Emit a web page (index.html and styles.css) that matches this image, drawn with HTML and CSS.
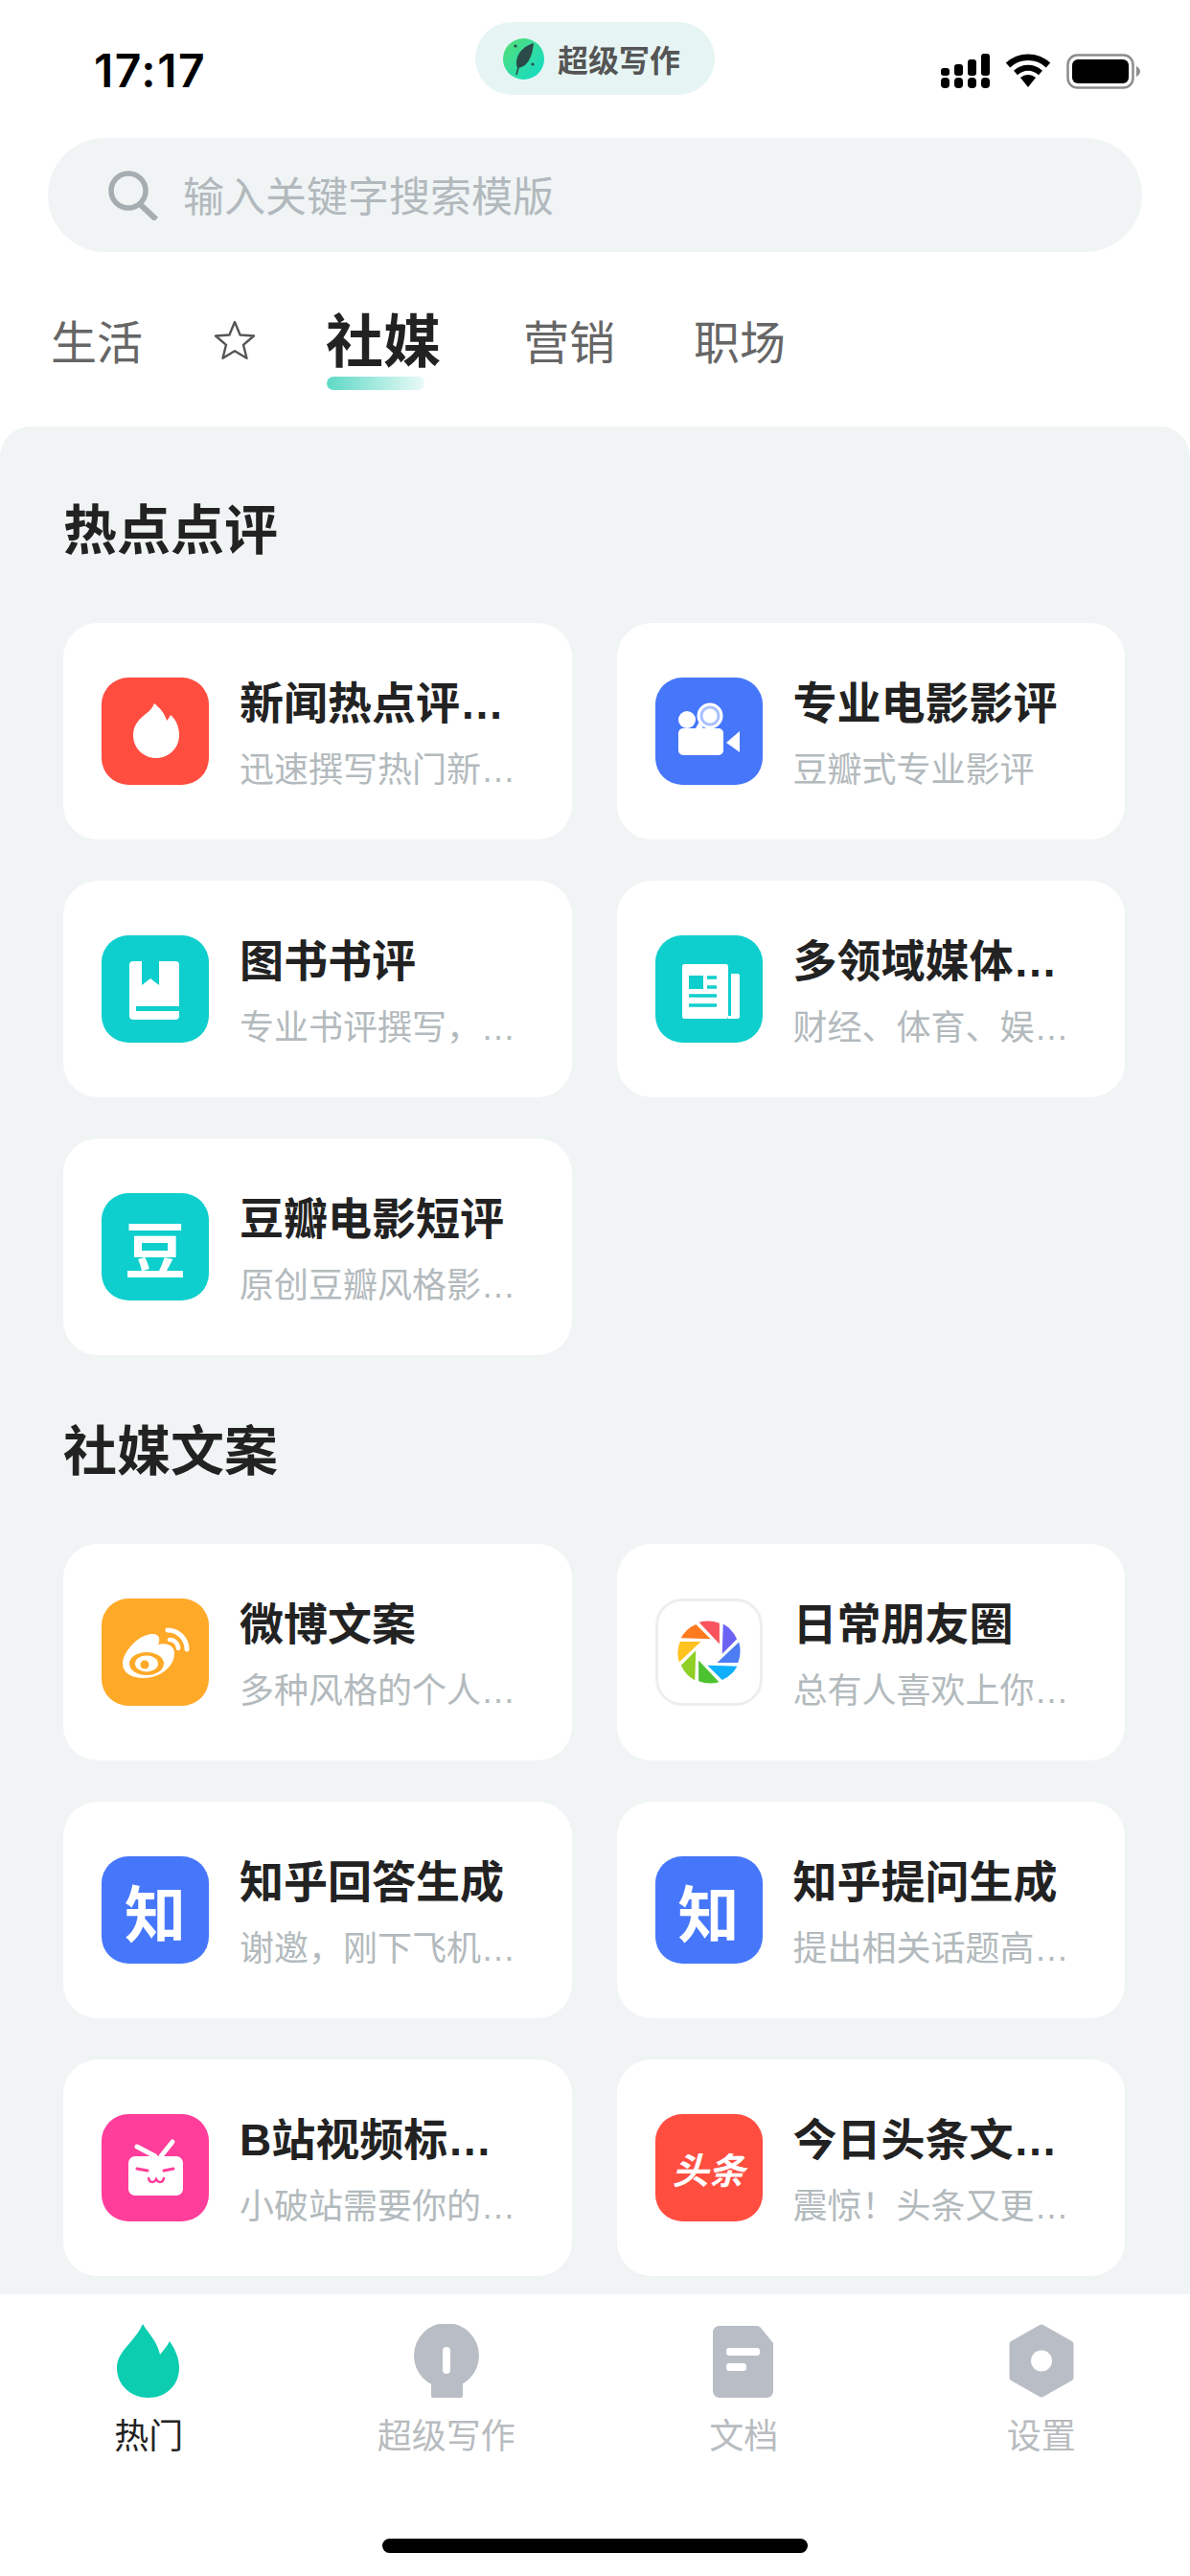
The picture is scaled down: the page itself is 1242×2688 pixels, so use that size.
FILE: index.html
```html
<!DOCTYPE html>
<html lang="zh-CN">
<head>
    <meta charset="UTF-8">
    <meta name="viewport" content="width=device-width, initial-scale=1.0">
    <title>超级写作</title>
    <link rel="stylesheet" href="styles.css">
</head>
<body>
    <!-- 状态栏 -->
    <header class="status-bar">
        <div class="time">17:17</div>
        <div class="app-pill">
            <svg class="app-logo" viewBox="0 0 43 43">
                <defs>
                    <linearGradient id="logoGrad" x1="0" y1="0" x2="1" y2="1">
                        <stop offset="0" stop-color="#57de74"/>
                        <stop offset="1" stop-color="#0edccb"/>
                    </linearGradient>
                </defs>
                <circle cx="21.5" cy="21.5" r="21.5" fill="url(#logoGrad)"/>
                <path d="M32 5C24 7 15 14 14 24c0 3 0 5 1 7 9-1 15-8 17-26z" fill="#2b4a4a"/>
                <path d="M17 27l-3 11" stroke="#2b4a4a" stroke-width="1.6" fill="none"/>
                <circle cx="13" cy="8" r="1.6" fill="#2b4a4a"/>
                <circle cx="31" cy="27" r="1.6" fill="#2b4a4a"/>
            </svg>
            <span>超级写作</span>
        </div>
        <div class="status-icons">
            <svg class="signal" viewBox="0 0 51 36">
                <rect x="0" y="25" width="9" height="11" rx="4"/><rect x="0" y="15" width="9" height="8" rx="3"/>
                <rect x="14" y="25" width="9" height="11" rx="4"/><rect x="14" y="11" width="9" height="12" rx="3"/>
                <rect x="28" y="25" width="9" height="11" rx="4"/><rect x="28" y="6" width="9" height="17" rx="3"/>
                <rect x="42" y="25" width="9" height="11" rx="4"/><rect x="42" y="0" width="9" height="23" rx="3"/>
            </svg>
            <svg class="wifi" viewBox="0 0 48 36">
                <path d="M3 12C15 1 33 1 45 12" fill="none" stroke="#000" stroke-width="6.5"/>
                <path d="M11 20c8-7 18-7 26 0" fill="none" stroke="#000" stroke-width="6"/>
                <path d="M16 25c5-4 11-4 16 0l-8 10z"/>
            </svg>
            <svg class="battery" viewBox="0 0 77 37">
                <rect x="1.5" y="1.5" width="68" height="34" rx="10" fill="none" stroke="#8c8c8c" stroke-width="2.5"/>
                <rect x="6" y="6" width="59" height="25" rx="6"/>
                <path d="M73 13c2 1 4 3 4 5.500s-2 4.500-4 5.500z" fill="#8c8c8c"/>
            </svg>
        </div>
    </header>

    <!-- 搜索 -->
    <div class="search">
        <svg class="search-icon" viewBox="0 0 54 52">
            <circle cx="22" cy="21" r="18" fill="none" stroke="#a5adb1" stroke-width="5.500"/>
            <path d="M34 35l17 16" stroke="#a5adb1" stroke-width="6" fill="none"/>
        </svg>
        <span class="search-text">输入关键字搜索模版</span>
    </div>

    <!-- 分类 -->
    <nav class="tabs">
        <span class="tab">生活</span>
        <svg class="tab-star" viewBox="0 0 44 42">
            <path d="M22 3l5.600 13.500 14.400 1-11 9.300 3.500 14-12.500-7.600-12.500 7.600 3.500-14-11-9.300 14.400-1z" fill="none" stroke="#555" stroke-width="2.400" stroke-linejoin="round"/>
        </svg>
        <span class="tab tab-active">社媒</span>
        <span class="tab tab-mid">营销</span>
        <span class="tab">职场</span>
    </nav>

    <main class="panel">
        <section class="group">
            <h2>热点点评</h2>
            <div class="cards">
                <div class="card">
                    <svg class="icon red" viewBox="0 0 112 112">
                        <path d="M55 27C60 31 66 37 68 45 70 43 71 41 72 39 78 44 81 52 81 60 81 74 70 84 57 84 44 84 33 74 33 60 33 49 40 43 46 38 50 35 53 32 55 27z" fill="#fff"/>
                    </svg>
                    <div class="card-text">
                        <div class="card-title">新闻热点评…</div>
                        <div class="card-desc">迅速撰写热门新…</div>
                    </div>
                </div>
                <div class="card">
                    <svg class="icon blue" viewBox="0 0 112 112">
                        <rect x="24" y="53" width="47" height="28" rx="5" fill="#fff"/>
                        <path d="M74 68L88 56V78z" fill="#fff"/>
                        <circle cx="33" cy="44" r="9" fill="#fff"/>
                        <path d="M42 53l4-7 4 7z" fill="#fff"/>
                        <circle cx="57" cy="40" r="12" fill="#a9c0fd" stroke="#fff" stroke-width="3"/>
                        <circle cx="57" cy="40" r="7.500" fill="#fff"/>
                    </svg>
                    <div class="card-text">
                        <div class="card-title">专业电影影评</div>
                        <div class="card-desc">豆瓣式专业影评</div>
                    </div>
                </div>
                <div class="card">
                    <svg class="icon teal" viewBox="0 0 112 112">
                        <rect x="29" y="27" width="52" height="61" rx="4" fill="#fff"/>
                        <path d="M42 27V52L51 45 60 52V27z" fill="#0ecfcd"/>
                        <rect x="36" y="74" width="46" height="5" fill="#0ecfcd"/>
                    </svg>
                    <div class="card-text">
                        <div class="card-title">图书书评</div>
                        <div class="card-desc">专业书评撰写，…</div>
                    </div>
                </div>
                <div class="card">
                    <svg class="icon teal" viewBox="0 0 112 112">
                        <rect x="28" y="30" width="48" height="57" rx="2.500" fill="#fff"/>
                        <path d="M79 40h7c1 0 2 1 2 2v43c0 1-1 2-2 2H76v-3h3z" fill="#fff"/>
                        <rect x="35" y="42" width="15" height="14" fill="#0ecfcd"/>
                        <path d="M54 44h10M54 54h10M35 63h29M35 73h29" stroke="#0ecfcd" stroke-width="3.500" fill="none"/>
                    </svg>
                    <div class="card-text">
                        <div class="card-title">多领域媒体…</div>
                        <div class="card-desc">财经、体育、娱…</div>
                    </div>
                </div>
                <div class="card">
                    <div class="icon teal icon-char">豆</div>
                    <div class="card-text">
                        <div class="card-title">豆瓣电影短评</div>
                        <div class="card-desc">原创豆瓣风格影…</div>
                    </div>
                </div>
            </div>
        </section>

        <section class="group">
            <h2>社媒文案</h2>
            <div class="cards">
                <div class="card">
                    <svg class="icon orange" viewBox="0 0 112 112">
                        <path d="M22 68C22 56 38 38 52 37 60 36 62 42 59 48 66 46 76 48 76 57 76 72 60 83 44 83 32 83 22 78 22 68z" fill="#fff"/>
                        <ellipse cx="47" cy="68" rx="18" ry="12" fill="#ffa928"/>
                        <ellipse cx="47" cy="68" rx="12" ry="8.500" fill="#fff"/>
                        <circle cx="45" cy="69" r="4.500" fill="#ffa928"/>
                        <path d="M69 33C80 33 89 42 89 53" stroke="#fff" stroke-width="5" stroke-linecap="round" fill="none"/>
                        <path d="M71 43C76 43 80 47 80 52" stroke="#fff" stroke-width="4.500" stroke-linecap="round" fill="none"/>
                    </svg>
                    <div class="card-text">
                        <div class="card-title">微博文案</div>
                        <div class="card-desc">多种风格的个人…</div>
                    </div>
                </div>
                <div class="card">
                    <svg class="icon outline" viewBox="-56 -56 112 112">
                        <g>
                            <path d="M-11-33A35 35 0 0 1 11.500-32V-9z" fill="#f9545e"/>
                            <path transform="rotate(45)" d="M-11-33A35 35 0 0 1 11.500-32V-9z" fill="#6c63f5"/>
                            <path transform="rotate(90)" d="M-11-33A35 35 0 0 1 11.500-32V-9z" fill="#4d7cf3"/>
                            <path transform="rotate(135)" d="M-11-33A35 35 0 0 1 11.500-32V-9z" fill="#0fb0fb"/>
                            <path transform="rotate(180)" d="M-11-33A35 35 0 0 1 11.500-32V-9z" fill="#4cc22f"/>
                            <path transform="rotate(225)" d="M-11-33A35 35 0 0 1 11.500-32V-9z" fill="#8fcf26"/>
                            <path transform="rotate(270)" d="M-11-33A35 35 0 0 1 11.500-32V-9z" fill="#ffc21f"/>
                            <path transform="rotate(315)" d="M-11-33A35 35 0 0 1 11.500-32V-9z" fill="#fd7a1e"/>
                        </g>
                    </svg>
                    <div class="card-text">
                        <div class="card-title">日常朋友圈</div>
                        <div class="card-desc">总有人喜欢上你…</div>
                    </div>
                </div>
                <div class="card">
                    <div class="icon blue icon-char">知</div>
                    <div class="card-text">
                        <div class="card-title">知乎回答生成</div>
                        <div class="card-desc">谢邀，刚下飞机…</div>
                    </div>
                </div>
                <div class="card">
                    <div class="icon blue icon-char">知</div>
                    <div class="card-text">
                        <div class="card-title">知乎提问生成</div>
                        <div class="card-desc">提出相关话题高…</div>
                    </div>
                </div>
                <div class="card">
                    <svg class="icon pink" viewBox="0 0 112 112">
                        <path d="M37 34l19 10M74 29L62 44" stroke="#fff" stroke-width="5" stroke-linecap="round" fill="none"/>
                        <rect x="28" y="44" width="57" height="41" rx="7" fill="#fff"/>
                        <path d="M37 57l11 2M75 57l-10 2" stroke="#ff3d9a" stroke-width="3" stroke-linecap="round" fill="none"/>
                        <path d="M49 67c1 5 6 5 8 1 2 4 7 4 8-1" stroke="#ff3d9a" stroke-width="2.500" stroke-linecap="round" fill="none"/>
                    </svg>
                    <div class="card-text">
                        <div class="card-title">B站视频标…</div>
                        <div class="card-desc">小破站需要你的…</div>
                    </div>
                </div>
                <div class="card">
                    <div class="icon red icon-toutiao">头条</div>
                    <div class="card-text">
                        <div class="card-title">今日头条文…</div>
                        <div class="card-desc">震惊！头条又更…</div>
                    </div>
                </div>
            </div>
        </section>
    </main>

    <!-- 底部导航 -->
    <footer class="tabbar">
        <div class="bar-item bar-active">
            <svg class="bar-icon" viewBox="0 0 70 77">
                <path d="M29 0C35 10 44 18 47 32 50 28 54 24 57 18 64 28 67 37 67 46 67 64 53 77 35 77 17 77 2 64 2 46 2 28 20 20 29 0z" fill="#0ccdb0"/>
            </svg>
            <span>热门</span>
        </div>
        <div class="bar-item">
            <svg class="bar-icon" viewBox="0 0 70 77">
                <circle cx="35" cy="33" r="34" fill="#b9bdc5"/>
                <rect x="19" y="55" width="33" height="22" rx="2" fill="#b9bdc5"/>
                <rect x="31" y="24" width="8" height="28" rx="4" fill="#fff"/>
            </svg>
            <span>超级写作</span>
        </div>
        <div class="bar-item">
            <svg class="bar-icon" viewBox="0 0 70 77">
                <path d="M10 2H49C51 2 52 3 53 4L66 20V70C66 74 63 77 59 77H10C6 77 3 74 3 70V9C3 5 6 2 10 2z" fill="#b9bdc5"/>
                <rect x="17" y="25" width="35" height="8" rx="3" fill="#fff"/>
                <rect x="17" y="41" width="21" height="8" rx="3" fill="#fff"/>
            </svg>
            <span>文档</span>
        </div>
        <div class="bar-item">
            <svg class="bar-icon" viewBox="0 0 70 77">
                <path d="M35 4L65 21V56L35 73 5 56V21z" fill="#b9bdc5" stroke="#b9bdc5" stroke-width="7" stroke-linejoin="round"/>
                <circle cx="35" cy="38.500" r="11" fill="#fff"/>
            </svg>
            <span>设置</span>
        </div>
        <div class="home-bar"></div>
    </footer>
</body>
</html>
```

FILE: styles.css
```css
* {
    box-sizing: border-box;
}
html, body {
    margin: 0;
    height: 2688px;
}
body {
    width: 1242px;
    display: flex;
    flex-direction: column;
    overflow: hidden;
    background-color: #fff;
    color: #222;
    font-family: "Liberation Sans", "Noto Sans CJK SC", sans-serif;
}

/* status bar */
.status-bar {
    height: 144px;
    flex: none;
    display: grid;
    grid-template-columns: 1fr auto 1fr;
    padding: 0 52px;
}
.time {
    margin: 47px 0 0 46px;
    font-family: Inter, sans-serif;
    font-size: 48px;
    line-height: 54px;
    font-weight: 600;
    letter-spacing: 1.5px;
    color: #000;
}
.app-pill {
    margin-top: 23px;
    height: 76px;
    width: 250px;
    display: flex;
    align-items: center;
    gap: 14px;
    padding-left: 29px;
    background-color: #e6f5f4;
    border-radius: 38px;
    font-size: 32px;
    font-weight: 700;
    color: #555;
}
.app-logo {
    width: 43px;
    height: 43px;
}
.status-icons {
    margin-top: 56px;
    height: 37px;
    display: flex;
    justify-content: flex-end;
    gap: 16px;
}
.signal {
    width: 51px;
    height: 36px;
}
.wifi {
    width: 48px;
    height: 36px;
}
.battery {
    width: 77px;
    height: 37px;
}

/* search */
.search {
    flex: none;
    margin: 0 50px;
    height: 119px;
    display: flex;
    align-items: center;
    gap: 25px;
    padding-left: 62px;
    background-color: #f0f4f5;
    border-radius: 60px;
    font-size: 43px;
    color: #b2b9bd;
}
.search-icon {
    width: 54px;
    height: 52px;
}
.search-text {
    margin-bottom: 3px;
}

/* tabs */
.tabs {
    flex: none;
    height: 182px;
    display: flex;
    align-items: center;
    gap: 74px;
    padding-left: 53px;
    font-size: 48px;
    color: #666;
}
.tab {
    position: relative;
}
.tab-star {
    width: 44px;
    height: 42px;
}
.tab-active {
    margin: 0 12px 6px -1px;
    font-size: 60px;
    font-weight: 700;
    color: #222;
}
.tab-active::after {
    content: "";
    position: absolute;
    left: 1px;
    bottom: -12px;
    width: 102px;
    height: 14px;
    border-radius: 7px;
    background: linear-gradient(to right, #5ed9c6, #eafaf7);
}
.tab-mid {
    margin-right: 8px;
}

/* content */
.panel {
    flex: 1;
    min-height: 0;
    overflow: hidden;
    padding: 67px 68px 0 66px;
    background-color: #f0f4f5;
    border-radius: 32px 32px 0 0;
}
.group {
    margin-bottom: 59px;
}
.group h2 {
    margin: 0 0 56px;
    padding-top: 2px;
    font-size: 56px;
    line-height: 80px;
    font-weight: 700;
    color: #222;
}
.cards {
    display: grid;
    grid-template-columns: minmax(0, 1fr) minmax(0, 1fr);
    column-gap: 47px;
    row-gap: 43px;
}
.card {
    height: 226px;
    display: flex;
    align-items: center;
    gap: 32px;
    padding: 0 58px 0 40px;
    background-color: #fff;
    border-radius: 36px;
}
.icon {
    flex: none;
    width: 112px;
    height: 112px;
    border-radius: 28px;
}
.red { background-color: #ff4d40; }
.blue { background-color: #4677fb; }
.teal { background-color: #0ecfcd; }
.orange { background-color: #ffa928; }
.pink { background-color: #ff3d9a; }
.outline {
    background-color: #fff;
    border: 3px solid #eee;
}
.icon-char {
    display: flex;
    align-items: center;
    justify-content: center;
    font-size: 64px;
    font-weight: 700;
    color: #fff;
}
.icon-toutiao {
    display: flex;
    align-items: center;
    justify-content: center;
    font-size: 38px;
    font-weight: 700;
    font-style: italic;
    color: #fff;
}
.card-text {
    flex: 1;
    min-width: 0;
    padding-top: 6px;
}
.card-title,
.card-desc {
    white-space: nowrap;
}
.card-title {
    font-size: 46px;
    line-height: 60px;
    font-weight: 700;
    color: #222;
}
.card-desc {
    margin-top: 16px;
    font-size: 36px;
    line-height: 48px;
    color: #b3babd;
}

/* bottom nav */
.tabbar {
    position: relative;
    flex: none;
    height: 294px;
    display: grid;
    grid-template-columns: repeat(4, 1fr);
    padding-top: 31px;
    background-color: #fff;
    font-size: 36px;
    color: #b8bcbf;
}
.bar-item {
    display: flex;
    flex-direction: column;
    align-items: center;
}
.bar-item span {
    margin-top: 16px;
    line-height: 50px;
}
.bar-active {
    color: #222;
}
.bar-icon {
    width: 70px;
    height: 77px;
}
.home-bar {
    position: absolute;
    left: 399px;
    bottom: 24px;
    width: 444px;
    height: 15px;
    border-radius: 8px;
    background-color: #000;
}
```
